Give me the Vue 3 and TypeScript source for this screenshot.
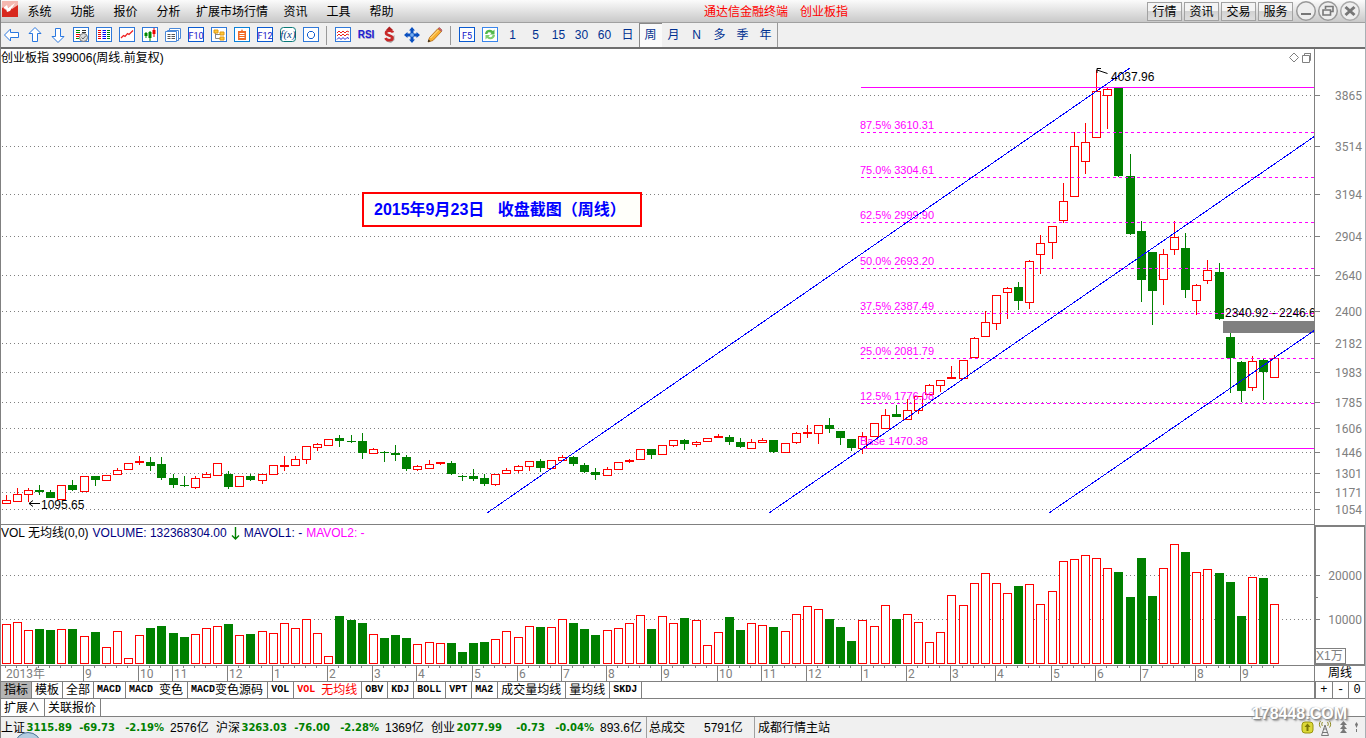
<script setup lang="ts">
type Candle = [kind: 'r' | 'g', high: number, top: number, bottom: number, low: number, volume: number]

const candles: Candle[] = [
  ['r', 495, 500, 504, 504, 624], ['r', 488, 494, 502, 502, 622], ['r', 488, 490, 495, 502, 630],
  ['g', 485, 490, 492, 495, 629], ['g', 490, 492, 498, 498, 630], ['r', 485, 485, 500, 500, 629],
  ['g', 480, 485, 490, 491, 629], ['r', 476, 476, 492, 492, 636], ['g', 476, 476, 480, 486, 632],
  ['r', 475, 475, 481, 481, 647], ['r', 468, 470, 475, 475, 631], ['r', 463, 463, 470, 470, 658],
  ['r', 456, 461, 463, 465, 635], ['g', 457, 462, 466, 471, 628], ['g', 457, 464, 478, 480, 626],
  ['g', 474, 478, 485, 488, 633], ['g', 476, 485, 486, 487, 637], ['r', 476, 478, 488, 489, 634],
  ['r', 472, 474, 478, 478, 628], ['r', 463, 463, 476, 476, 626], ['g', 471, 474, 487, 489, 624],
  ['r', 476, 476, 487, 487, 635], ['g', 474, 476, 480, 481, 634], ['r', 474, 474, 481, 484, 631],
  ['r', 465, 465, 475, 475, 633], ['r', 456, 465, 467, 471, 623], ['r', 456, 459, 466, 466, 628],
  ['r', 446, 446, 460, 464, 619], ['r', 443, 444, 448, 451, 633], ['r', 439, 439, 446, 446, 656],
  ['g', 435, 438, 441, 447, 616], ['g', 435, 441, 442, 443, 620], ['g', 433, 441, 453, 459, 623],
  ['r', 448, 449, 454, 454, 634], ['g', 451, 452, 453, 462, 638], ['g', 445, 453, 455, 461, 635],
  ['g', 455, 457, 469, 471, 638], ['r', 465, 466, 470, 471, 644], ['r', 460, 464, 469, 469, 642],
  ['r', 462, 462, 464, 465, 643], ['g', 461, 463, 474, 475, 643], ['g', 475, 476, 477, 481, 652],
  ['g', 469, 476, 479, 481, 643], ['g', 474, 478, 484, 486, 642], ['r', 474, 474, 485, 486, 639],
  ['r', 468, 470, 474, 474, 631], ['r', 465, 466, 471, 473, 637], ['r', 461, 461, 467, 471, 626],
  ['g', 459, 461, 468, 472, 627], ['r', 460, 460, 469, 469, 627], ['r', 455, 457, 461, 461, 619],
  ['g', 456, 457, 464, 466, 623], ['g', 463, 465, 472, 473, 629], ['g', 468, 472, 475, 480, 635],
  ['r', 467, 469, 476, 476, 630], ['r', 462, 462, 470, 470, 628], ['r', 459, 460, 462, 463, 623],
  ['r', 449, 449, 460, 460, 615], ['g', 449, 449, 455, 459, 629], ['r', 445, 445, 455, 455, 616],
  ['r', 440, 440, 446, 447, 623], ['g', 439, 440, 444, 450, 618], ['r', 441, 442, 445, 447, 620],
  ['r', 438, 438, 442, 442, 645], ['r', 434, 436, 438, 438, 632], ['g', 435, 437, 442, 445, 617],
  ['g', 438, 442, 447, 448, 630], ['r', 439, 442, 449, 449, 623], ['r', 438, 440, 443, 443, 625],
  ['g', 440, 440, 452, 453, 627], ['r', 443, 443, 453, 453, 631], ['r', 432, 433, 443, 444, 614],
  ['r', 425, 432, 434, 438, 606], ['r', 425, 425, 434, 444, 609], ['g', 418, 425, 429, 433, 619],
  ['g', 431, 431, 438, 445, 627], ['g', 439, 439, 448, 451, 641], ['r', 432, 436, 449, 454, 620],
  ['r', 423, 423, 437, 437, 626], ['r', 409, 415, 429, 429, 605], ['g', 405, 414, 417, 417, 619],
  ['r', 399, 410, 420, 420, 614], ['r', 396, 396, 411, 414, 622], ['r', 384, 385, 395, 395, 642],
  ['r', 380, 380, 386, 392, 632], ['r', 366, 377, 379, 379, 595], ['r', 360, 360, 379, 379, 605],
  ['r', 337, 338, 358, 358, 583], ['r', 311, 322, 337, 337, 573], ['r', 295, 295, 324, 330, 583],
  ['r', 287, 288, 293, 319, 593], ['g', 282, 287, 301, 310, 586], ['r', 260, 261, 303, 309, 584],
  ['r', 235, 243, 255, 274, 604], ['r', 226, 226, 243, 259, 591], ['r', 183, 201, 221, 223, 561],
  ['r', 132, 146, 197, 197, 559], ['r', 123, 142, 162, 174, 555], ['r', 70, 91, 138, 138, 558],
  ['r', 88, 89, 96, 129, 568], ['g', 88, 88, 176, 177, 572], ['g', 154, 176, 234, 235, 597],
  ['g', 221, 231, 280, 302, 558], ['g', 252, 252, 291, 325, 596], ['r', 249, 254, 280, 305, 568],
  ['r', 221, 237, 250, 255, 544], ['g', 233, 248, 290, 298, 552], ['r', 284, 285, 301, 315, 572],
  ['r', 260, 270, 281, 284, 569], ['g', 263, 272, 319, 320, 573], ['g', 333, 337, 358, 393, 582],
  ['g', 361, 362, 391, 402, 616], ['r', 356, 361, 388, 391, 577], ['g', 359, 360, 372, 400, 578],
  ['r', 355, 358, 378, 378, 604],
]

const centre = (i: number): number => 6 + Math.floor(i * 11.127 + 0.18)

const bars = candles.map(([kind, high, top, bottom, low, volume], i) => ({
  x: centre(i),
  kind,
  body: kind === 'g'
    ? { x: centre(i) - 4, y: top, w: 9, h: bottom - top }
    : { x: centre(i) - 3.5, y: top + 0.5, w: 8, h: Math.max(bottom - top - 1, 1) },
  vol: kind === 'g'
    ? { x: centre(i) - 4, y: volume, w: 9, h: 664 - volume }
    : { x: centre(i) - 3.5, y: volume + 0.5, w: 8, h: 663 - volume },
  wick: `M${centre(i) + 0.5} ${high}V${top}M${centre(i) + 0.5} ${bottom}V${low}`,
}))

const priceScale: [number, number][] = [
  [95, 3865], [146, 3514], [194, 3194], [236, 2904], [275, 2640], [311, 2400], [343, 2182],
  [372, 1983], [402, 1785], [428, 1606], [452, 1446], [473, 1301], [492, 1171], [509, 1054],
]
const volumeScale: [number, number][] = [[575, 20000], [619, 10000]]

const levels: [number, string][] = [
  [132, '87.5% 3610.31'], [177, '75.0% 3304.61'], [222, '62.5% 2999.90'], [268, '50.0% 2693.20'],
  [313, '37.5% 2387.49'], [358, '25.0% 2081.79'], [403, '12.5% 1776.08'],
]

const months: [number, string][] = [
  [7, '9'], [12, '10'], [15, '11'], [20, '12'], [24, '1'], [29, '2'], [33, '3'], [37, '4'], [42, '5'],
  [46, '6'], [50, '7'], [54, '8'], [59, '9'], [64, '10'], [68, '11'], [72, '12'], [77, '1'], [81, '2'],
  [85, '3'], [89, '4'], [94, '5'], [98, '6'], [102, '7'], [107, '8'], [111, '9'],
]

const menu = ['系统', '功能', '报价', '分析', '扩展市场行情', '资讯', '工具', '帮助']
const services = ['行情', '资讯', '交易', '服务']

const frame = '<rect x="1.5" y="1.5" width="15" height="14" fill="#fff" stroke="#2f78d8"/>'
interface Tool { name: string; art: string }
const fLabel = (t: string): string =>
  `<rect x="1.5" y="1.5" width="15" height="14" fill="#fff" stroke="#0a5ad0"/><text x="9" y="12.5" text-anchor="middle" font-family="Roboto, sans-serif" font-size="9" fill="#1414c8">${t}</text>`

const group1: Tool[] = [
  { name: '后退', art: '<path d="M1.5 9L7.5 3V6.5H15.5V11.5H7.5V15Z" fill="#fff" stroke="#2a78e0"/>' },
  { name: '向上', art: '<path d="M9 1.5L15 7.5H11.5V15.5H6.5V7.5H3Z" fill="#fff" stroke="#2a78e0"/>' },
  { name: '向下', art: '<path d="M9 16.5L3 10.5H6.5V2.5H11.5V10.5H15Z" fill="#fff" stroke="#2a78e0"/>' },
  { name: '自选', art: frame + '<path d="M4 4.5H8M4 6.5H8" stroke="#080"/><path d="M4 8.5H8M4 10.5H7" stroke="#e00"/><path d="M10 4.5H14M10 6.5H14" stroke="#333"/><path d="M4 12.5H7" stroke="#080"/><circle cx="11.5" cy="11.5" r="4" fill="#ddd" stroke="#777"/><path d="M9.5 11.5L11 13L14 9.5" stroke="#666" fill="none"/>' },
  { name: '行情表', art: frame + '<path d="M3 4.5H6M3 6.5H6M3 8.5H6M3 10.5H6M3 12.5H6" stroke="#e00"/><path d="M7.5 4.5H11M7.5 6.5H11M7.5 8.5H11M7.5 10.5H11M7.5 12.5H11" stroke="#00f"/><path d="M12 4.5H15M12 6.5H15M12 8.5H15M12 10.5H15M12 12.5H15" stroke="#080"/>' },
  { name: '分时', art: frame + '<path d="M3 12L5.5 9.5L7 10.5L9.5 7.5L11 8.5L15 4.5" fill="none" stroke="#e22" stroke-width="1.3"/>' },
  { name: 'K线', art: frame + '<path d="M5 6V12M9 5V15" stroke="#080"/><path d="M13 2V11" stroke="#e00"/><path d="M3.5 7H6.5V10H3.5Z" fill="#080"/><path d="M7.5 6H10.5V12H7.5Z" fill="#080"/><path d="M11.5 4H14.5V8H11.5Z" fill="#e00"/>' },
  { name: '多窗', art: '<path d="M5.5 2.5H16.5V12.5H5.5Z" fill="#fff" stroke="#4a88d8"/><path d="M3.5 4.5H14.5V14.5H3.5Z" fill="#fff" stroke="#4a88d8"/><path d="M1.5 5.5H12.5V15.5H1.5Z" fill="#fff" stroke="#4a88d8"/><path d="M3.5 8.5H6.5M7.5 8.5H11M3.5 10.5H6.5M7.5 10.5H11M3.5 12.5H6.5M7.5 12.5H11" stroke="#555"/>' },
  { name: '资料', art: fLabel('F10') },
  { name: '树形', art: frame + '<path d="M5.5 6V12.5H10M5.5 8.5H10" stroke="#888" fill="none"/><path d="M4 4H8V7H4Z M10 6H14V9H10Z M10 11H14V14H10Z" fill="#ffc83a" stroke="#e09a10"/>' },
  { name: '自选股', art: '<rect x="1.5" y="1.5" width="15" height="14" fill="#fff" stroke="#0a80d8"/><path d="M5 5H8L9 3L10 5H13V14H5Z" fill="#f06a28"/><path d="M6.5 7.5H11.5M6.5 9.5H11.5M6.5 11.5H11.5" stroke="#fff"/>' },
  { name: '委托', art: fLabel('F12') },
  { name: '公式', art: '<rect x="1.5" y="1.5" width="15" height="14" rx="3" fill="#fff" stroke="#087878"/><text x="9" y="12" text-anchor="middle" font-family="Liberation Serif, serif" font-style="italic" font-size="11" fill="#083c80">f(x)</text>' },
  { name: '圆', art: frame + '<path d="M7.5 5.5H10.5L12.5 7.5V10L10.5 12.5H7.5L5.5 10V7.5Z" fill="#fff" stroke="#0a5ad0"/>' },
]
const group2: Tool[] = [
  { name: '波动', art: frame + '<path d="M3 7L5 5L7 7L9 5L11 7L13 5L15 6" fill="none" stroke="#e22"/><path d="M3 10L5 8L7 10L9 8L11 10L13 8L15 9" fill="none" stroke="#e22"/><path d="M3 13.5L5 11.5L7 13.5L9 11.5L11 13.5L13 11.5L15 12.5" fill="none" stroke="#22d"/>' },
  { name: '指标', art: '<text x="9.5" y="13" text-anchor="middle" font-family="Liberation Sans, sans-serif" font-weight="bold" font-size="10" fill="#aac">RSI</text><text x="9" y="12" text-anchor="middle" font-family="Liberation Sans, sans-serif" font-weight="bold" font-size="10" fill="#2020d0">RSI</text>' },
  { name: '资金', art: '<path d="M6 15.5L11 17L14.500 14V9Z" fill="#aaa"/><path d="M13 6.500C12 4 6 4 6 7C6 10 12.500 9 12.500 12C12.500 15 6.500 15 5.500 12" fill="none" stroke="#c82828" stroke-width="2.600"/><path d="M9.300 0.500L13 4H6Z" fill="#b02020"/>' },
  { name: '移动', art: '<path d="M9 1L12 4.500H10.500V7.500H13.500V6L17 9L13.500 12V10.500H10.500V13.500H12L9 17L6 13.500H7.500V10.500H4.500V12L1 9L4.500 6V7.500H7.500V4.500H6Z" fill="#0a50c0"/><path d="M7 9H11M9 7V11" stroke="#9cf"/>' },
  { name: '画线', art: '<path d="M2 16L3.500 11.500L12 2.500L15.500 5.500L7 14.500Z" fill="#f8b030" stroke="#b06a18" stroke-width=".8"/><path d="M12 2.500L13.500 1.500L16 4L15.500 5.500Z" fill="#d86060" stroke="#955" stroke-width=".6"/><path d="M2 16L2.500 13.500L4.500 15.200Z" fill="#222"/><path d="M4.500 12L12.500 4" stroke="#ffe9a0"/>' },
]
const group3: Tool[] = [
  { name: '切换', art: fLabel('F5') },
  { name: '刷新', art: '<rect x="1.5" y="1.5" width="15" height="14" fill="#fff" stroke="#3a86ec"/><path d="M4 8C4 4 9 2.500 12 5L13.500 3.500V8.500H9L10.500 7C8.500 5.500 6.500 6 6.500 8Z" fill="#52b84c"/><path d="M14 9C14 13 9 14.500 6 12L4.500 13.500V9H9L7.500 10.500C9.500 12 11.500 11 11.500 9Z" fill="#7fd070"/>' },
]
const periods = ['1', '5', '15', '30', '60', '日', '周', '月', 'N', '多', '季', '年']

interface Part { t: string; latin?: boolean }
const split = (s: string): Part[] =>
  (s.match(/[\x20-\x7e]+|[^\x20-\x7e]+/g) ?? []).map((t) => ({ t, latin: /^[\x20-\x7e]/.test(t) }))
const tabs = [
  '指标', '模板', '全部', 'MACD', 'MACD 变色', 'MACD变色源码', 'VOL', 'VOL 无均线', 'OBV', 'KDJ',
  'BOLL', 'VPT', 'MA2', '成交量均线', '量均线', 'SKDJ',
].map((label) => ({ label, parts: split(label) }))

const quotes = [
  { name: '上证', last: '3115.89', change: '-69.73', pct: '-2.19%', amount: '2576亿' },
  { name: '沪深', last: '3263.03', change: '-76.00', pct: '-2.28%', amount: '1369亿' },
  { name: '创业', last: '2077.99', change: '-0.73', pct: '-0.04%', amount: '893.6亿' },
]
</script>

<template>
  <div class="app">
    <header class="menubar">
      <svg class="logo" width="16" height="16" viewBox="0 0 16 16">
        <rect width="16" height="16" fill="#d8281e" />
        <path d="M0 0H16V4L10 8L9 5L3 9L2 6L0 7Z" fill="#f4b8b0" />
        <path d="M1 7L5 4L6 7L13 2L8 10L5 11L4 8Z" fill="#fff" />
      </svg>
      <nav class="menu">
        <button v-for="m in menu" :key="m" type="button">{{ m }}</button>
      </nav>
      <div class="title"><span>通达信金融终端</span><span>创业板指</span></div>
      <div class="services">
        <button v-for="s in services" :key="s" type="button">{{ s }}</button>
      </div>
      <div class="window-buttons">
        <button type="button" aria-label="最小化">
          <svg width="22" height="22" viewBox="0 0 22 22"><circle cx="11" cy="11" r="9.300" fill="#eee" stroke="#999" stroke-width="1.500" /><path d="M6 14H16" stroke="#777" stroke-width="2" /></svg>
        </button>
        <button type="button" aria-label="还原">
          <svg width="22" height="22" viewBox="0 0 22 22"><circle cx="11" cy="11" r="9.300" fill="#eee" stroke="#999" stroke-width="1.500" /><path d="M8.500 9V6.500H16V11.500H14M6 10H13.500V15H6Z" fill="none" stroke="#777" stroke-width="1.600" /></svg>
        </button>
        <button type="button" aria-label="关闭">
          <svg width="22" height="22" viewBox="0 0 22 22"><circle cx="11" cy="11" r="9.300" fill="#eee" stroke="#aaa" stroke-width="1.500" /><path d="M6.500 7L15.500 15M15.500 7L6.500 15" stroke="#777" stroke-width="3" /></svg>
        </button>
      </div>
    </header>

    <div class="toolbar">
      <button v-for="t in group1" :key="t.name" type="button" :aria-label="t.name">
        <svg width="18" height="18" viewBox="0 0 18 18" v-html="t.art"></svg>
      </button>
      <i class="sep"></i>
      <button v-for="t in group2" :key="t.name" type="button" :aria-label="t.name">
        <svg width="18" height="18" viewBox="0 0 18 18" v-html="t.art"></svg>
      </button>
      <i class="sep"></i>
      <button v-for="t in group3" :key="t.name" type="button" :aria-label="t.name">
        <svg width="18" height="18" viewBox="0 0 18 18" v-html="t.art"></svg>
      </button>
      <button v-for="p in periods" :key="p" type="button" class="period" :class="{ on: p === '周' }">{{ p }}</button>
      <i class="end"></i>
    </div>

    <main class="panes">
      <section class="plot price">
        <svg width="100%" height="475">
          <g transform="translate(-1 -49)">
            <g class="dots">
              <line v-for="[y] in priceScale" :key="y" x1="2" :y1="y + 0.5" x2="100%" :y2="y + 0.5" />
            </g>
            <g class="crisp">
              <g v-for="b in bars" :key="b.x" :class="b.kind">
                <path :d="b.wick" />
                <rect :x="b.body.x" :y="b.body.y" :width="b.body.w" :height="b.body.h" />
              </g>
            </g>
            <g class="levels">
              <line x1="861" y1="87.5" x2="101%" y2="87.5" />
              <line v-for="[y] in levels" :key="y" class="dash" x1="861" :y1="y + 0.5" x2="101%" :y2="y + 0.5" />
              <line x1="861" y1="448.5" x2="101%" y2="448.5" />
            </g>
            <g class="level-text">
              <text v-for="[y, t] in levels" :key="t" x="860" :y="y - 3">{{ t }}</text>
              <text x="860" y="445">Base 1470.38</text>
            </g>
            <rect x="1223" y="321" width="101%" height="12" fill="#808080" />
            <g class="channel">
              <path d="M487 513L1130 68" />
              <path d="M769 513L1315 136" />
              <path d="M1049 513L1315 330" />
            </g>
            <g class="note">
              <text x="1" y="62">创业板指 399006(周线.前复权)</text>
              <text x="1111" y="81">4037.96</text>
              <text x="41" y="509">1095.65</text>
              <text x="1225" y="317">2340.92 - 2246.6</text>
            </g>
            <path d="M1107.500 73.500L1097 70M1101 68.500H1097V73M40 503.500H29M33 500.500L29 503.500L33 506.500" fill="none" stroke="#000" />
          </g>
        </svg>
        <p class="caption">2015年9月23日&nbsp;&nbsp; 收盘截图（周线）</p>
        <svg class="corner" width="22" height="12" viewBox="0 0 22 12">
          <path d="M5 1L9.500 5.500L5 10L0.500 5.500Z" fill="none" stroke="#808080" />
          <path d="M13.500 3.500H20.500V10.500H13.500ZM15.500 3V1.500H22M21.500 1V8.500H21" fill="none" stroke="#808080" />
        </svg>
      </section>
      <aside class="scale">
        <svg width="100%" height="475">
          <g transform="translate(-1315 -49)">
            <g v-for="[y, v] in priceScale" :key="y" class="mark">
              <path :d="`M1315 ${y + 0.5}H1320`" />
              <text x="1362" :y="y + 5">{{ v }}</text>
            </g>
          </g>
        </svg>
      </aside>

      <section class="plot volume">
        <div class="legend">
          <span>VOL 无均线(0,0)</span>
          <span class="navy">VOLUME: 132368304.00</span>
          <svg width="9" height="13" viewBox="0 0 9 13"><path d="M4.500 0V12M1 8.500L4.500 12L8 8.500" fill="none" stroke="#008000" stroke-width="1.400" /></svg>
          <span class="navy">MAVOL1: -</span>
          <span class="pink">MAVOL2: -</span>
        </div>
        <svg width="100%" height="140">
          <g transform="translate(-1 -525)">
            <g class="dots">
              <line v-for="[y] in volumeScale" :key="y" x1="2" :y1="y + 0.5" x2="100%" :y2="y + 0.5" />
            </g>
            <g class="crisp">
              <g v-for="b in bars" :key="b.x" :class="b.kind">
                <rect :x="b.vol.x" :y="b.vol.y" :width="b.vol.w" :height="b.vol.h" />
              </g>
            </g>
          </g>
        </svg>
      </section>
      <aside class="scale volume-scale">
        <svg width="100%" height="137">
          <g transform="translate(-1316 -527)">
            <g v-for="[y, v] in volumeScale" :key="y" class="mark">
              <path :d="`M1315 ${y + 0.5}H1320`" />
              <text x="1362" :y="y + 5">{{ v }}</text>
            </g>
            <path class="minor" d="M1315 597.500H1318" />
          </g>
        </svg>
        <span class="unit">X1万</span>
      </aside>

      <section class="plot dates">
        <svg width="100%" height="15">
          <g transform="translate(-1 -666)">
            <g class="date-ticks">
              <path v-for="b in bars" :key="b.x" :d="`M${b.x - 0.5} 666V668`" />
              <path v-for="[i] in months" :key="i" :d="`M${centre(i) - 0.5} 666V681`" />
            </g>
            <g class="date-text">
              <text x="6" y="678">2013年</text>
              <text v-for="[i, m] in months" :key="i" :x="centre(i) + 1" y="678">{{ m }}</text>
            </g>
          </g>
        </svg>
      </section>
      <aside class="scale period-name">周线</aside>
    </main>

    <div class="tab-row">
      <div class="tabs">
        <button v-for="(t, i) in tabs" :key="t.label" type="button" :class="{ narrow: i < 3, active: i === 0, current: t.label === 'VOL 无均线' }">
          <span v-for="p in t.parts" :key="p.t" :class="{ latin: p.latin }">{{ p.t }}</span>
        </button>
      </div>
      <div class="zoomers">
        <button type="button">+</button><button type="button">-</button><button type="button">0</button>
      </div>
    </div>
    <div class="ext-row">
      <button type="button">扩展∧</button>
      <button type="button">关联报价</button>
    </div>

    <footer class="status">
      <div v-for="q in quotes" :key="q.name" class="quote">
        <span>{{ q.name }}</span><b>{{ q.last }}</b><b>{{ q.change }}</b><b>{{ q.pct }}</b><span class="amount">{{ q.amount }}</span>
      </div>
      <div class="total"><span>总成交</span><span>5791亿</span></div>
      <div class="host">成都行情主站</div>
      <svg class="tray" width="60" height="16" viewBox="0 0 60 16">
        <rect x="1" y="2" width="11" height="11" rx="3" fill="#dcd838" stroke="#98940c" />
        <path d="M6.500 3.500L9.500 7H7.500V11H5.500V7H3.500Z" fill="#7c7808" />
        <path d="M24 5L20.500 15.500H27.500L24 5M22.500 9H25.500M21.500 12.500H26.500" fill="none" stroke="#777" />
        <path d="M21.500 2C20.500 3.500 20.500 5 21.500 6M19.500 1C18 3 18 5.500 19.500 7.500M26.500 2C27.500 3.500 27.500 5 26.500 6M28.500 1C30 3 30 5.500 28.500 7.500" fill="none" stroke="#8c8820" />
        <path d="M42.500 1L46 5H43.500V6L46 9H43.500V10L46 13H39L41.500 10V9H39L41.500 6V5H39Z" fill="#777" />
        <path d="M54 4.500L55.500 2L57 4.500L55.500 8ZM55 9H56V12H55Z" fill="#777" />
      </svg>
      <svg class="orb" width="26" height="6" viewBox="0 0 26 6">
        <ellipse cx="13" cy="13" rx="13" ry="12.500" fill="#b4cde0" stroke="#4a7396" />
      </svg>
      <span class="watermark">178448.COM</span>
    </footer>
  </div>
</template>

<style>
body {
  background: #fff;
}
</style>

<style scoped>
.app {
  position: relative;
  display: flex;
  flex-direction: column;
  min-height: 100vh;
  box-sizing: border-box;
  border-left: 1px solid #808080;
  border-right: 1px solid #a8b0b4;
  overflow: hidden;
  color: #000;
  font: 12px/16px "Liberation Sans", "Noto Sans CJK SC", sans-serif;
}
button {
  margin: 0;
  padding: 0;
  border: 0;
  background: none;
  color: inherit;
  font: inherit;
  white-space: nowrap;
}
svg {
  display: block;
}
text {
  white-space: pre;
}

.menubar {
  display: flex;
  align-items: center;
  height: 22px;
  border-bottom: 1px solid #a0a0a0;
  background: linear-gradient(#fbfbfb, #c9c9c9);
}
.logo {
  margin: 0 0 4px 1px;
}
.menu {
  display: flex;
}
.menu button {
  min-width: 43px;
  padding: 2px 6px 0;
}
.title {
  flex: 1;
  display: flex;
  justify-content: center;
  gap: 12px;
  padding: 2px 0 0 2px;
  color: #f00;
}
.services {
  display: flex;
  gap: 2px;
}
.services button {
  box-sizing: border-box;
  width: 35px;
  height: 19px;
  border: 1px solid #a2a2a2;
  background: linear-gradient(#f4f4f4 50%, #d2d2d2 50%, #dedede);
  line-height: 18px;
}
.window-buttons {
  display: flex;
  margin: 0 4px 0 2px;
}

.toolbar {
  display: flex;
  height: 24px;
  margin-left: -1px;
  background: #f0f0f0;
  border-bottom: 2px solid #6e6e6e;
}
.toolbar button {
  display: flex;
  align-items: center;
  justify-content: center;
  width: 23px;
  height: 24px;
}
.toolbar .period {
  color: #003090;
}
.toolbar .on {
  background: #fafafa;
  box-shadow: inset 1px 1px #888;
}
.sep {
  width: 1px;
  margin: 3px 4px 2px;
  background: #999;
}
.end {
  width: 1px;
  background: #999;
}

.panes {
  display: grid;
  grid-template-columns: minmax(0, 1fr) 51px;
}
.plot {
  position: relative;
  border-bottom: 1px solid #808080;
}
.scale {
  box-sizing: border-box;
  border-left: 1px solid #808080;
}
.dots line {
  stroke: #808080;
  stroke-dasharray: 1 3;
  shape-rendering: crispEdges;
}
.crisp {
  shape-rendering: crispEdges;
}
.r path,
.r rect {
  stroke: #f00;
  fill: #fff;
}
.g path {
  stroke: #008000;
}
.g rect {
  fill: #008000;
}
.levels line {
  stroke: #f0f;
  shape-rendering: crispEdges;
}
.levels .dash {
  stroke-dasharray: 3 3;
}
.level-text {
  fill: #f0f;
  font-size: 11px;
}
.channel path {
  stroke: #00f;
  shape-rendering: crispEdges;
}
.caption {
  position: absolute;
  top: 143px;
  left: 361px;
  box-sizing: border-box;
  margin: 0;
  padding: 0 14px 0 10px;
  border: 2px solid #f00;
  background: #fffffa;
  color: #00f;
  font-size: 16px;
  font-weight: bold;
  line-height: 31px;
  white-space: nowrap;
}
.corner {
  position: absolute;
  top: 3px;
  right: 3px;
}
.mark path,
.minor {
  stroke: #808080;
  shape-rendering: crispEdges;
}
.mark text {
  fill: #808080;
  font-family: Roboto, sans-serif;
  font-size: 12px;
  text-anchor: end;
}
.legend {
  position: absolute;
  top: 0;
  left: 0;
  display: flex;
  align-items: center;
  gap: 4px;
  white-space: nowrap;
}
.navy {
  color: #000080;
}
.pink {
  color: #f0f;
}
.volume-scale {
  position: relative;
  border: 2px solid #808080;
  border-width: 2px 1px 2px 2px;
}
.unit {
  position: absolute;
  bottom: 0;
  left: 0;
  padding: 0 2px 0 0;
  border: 1px solid #808080;
  border-left: 0;
  color: #808080;
  line-height: 14px;
}
.date-ticks path {
  stroke: #808080;
  shape-rendering: crispEdges;
}
.date-text {
  fill: #808080;
  font-family: Roboto, "Noto Sans CJK SC", sans-serif;
}
.period-name {
  border-bottom: 1px solid #808080;
  text-align: center;
  line-height: 15px;
}

.tab-row,
.ext-row {
  display: flex;
  border-bottom: 1px solid #808080;
}
.tabs {
  flex: 1;
  display: flex;
  border-right: 1px solid #808080;
}
.tabs button {
  display: flex;
  align-items: center;
  height: 16px;
  padding: 0 4px 0 3px;
  border-right: 1px solid #808080;
  line-height: 16px;
  white-space: pre;
}
.tabs .narrow {
  padding: 0 3px;
}
.tabs .active {
  background: #b4b4b4;
}
.tabs .current {
  color: #f00;
}
.tabs .latin {
  font-family: "Liberation Mono", monospace;
  font-size: 10px;
  font-weight: bold;
}
.zoomers {
  display: flex;
  width: 50px;
}
.zoomers button {
  flex: 1;
  border-left: 1px solid #808080;
  font-family: "Liberation Mono", monospace;
}
.ext-row button {
  height: 17px;
  padding: 0 4px 0 3px;
  border-right: 1px solid #808080;
}

.status {
  position: relative;
  flex: 1;
  display: flex;
  align-items: center;
  min-height: 21px;
  background: #f0f0f0;
  white-space: nowrap;
}
.quote {
  display: grid;
  grid-template-columns: 25px 46px 43px 49px 52px;
}
.quote b {
  color: #008000;
  font-family: "DejaVu Sans", sans-serif;
  font-size: 10px;
  text-align: right;
}
.amount {
  padding-left: 6px;
}
.total,
.host {
  display: flex;
  align-items: center;
  align-self: stretch;
  border-left: 1px solid #a0a0a0;
}
.total {
  gap: 19px;
  width: 105px;
  padding-left: 2px;
}
.host {
  flex: 1;
  padding-left: 3px;
}
.tray {
  margin-right: 4px;
}
.orb {
  position: absolute;
  bottom: 0;
  left: 14px;
}
.watermark {
  position: absolute;
  right: 18px;
  bottom: 13px;
  color: #fff;
  font: bold 16px/22px "Liberation Sans", sans-serif;
  text-shadow: 1px 1px 1px #888, -1px 0 1px #aaa, 2px 2px 2px #999;
}
</style>
